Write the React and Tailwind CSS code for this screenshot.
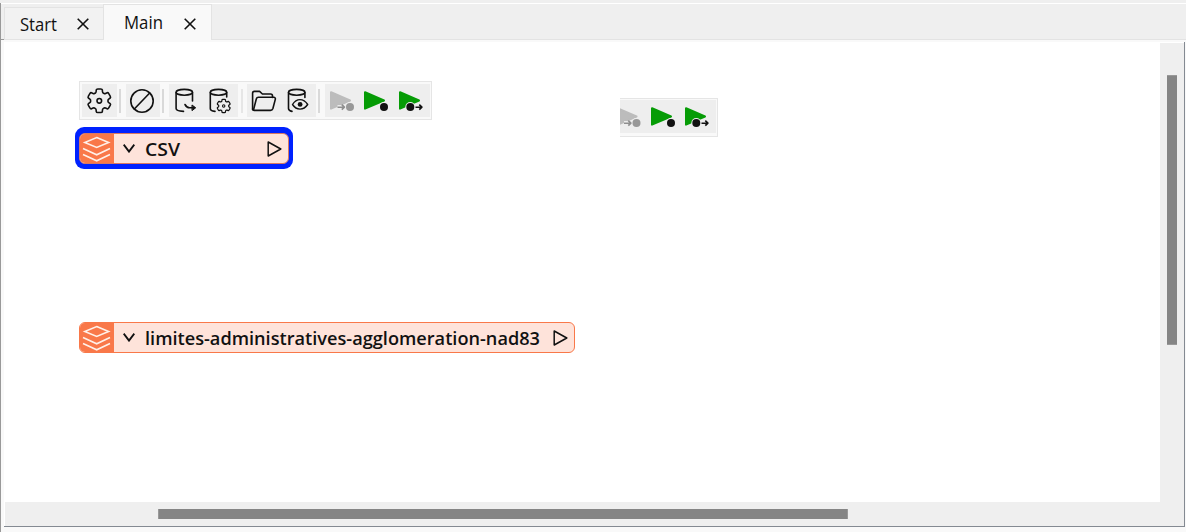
import React from "react";

const INK = "#111111";

function gearPath(cx, cy, tip, root) {
  const points = [];
  for (let i = 0; i < 6; i++) {
    const base = -90 + i * 60;
    [[root, -22], [tip, -14], [tip, 14], [root, 22]].forEach(([r, d]) => {
      const a = ((base + d) * Math.PI) / 180;
      points.push([cx + r * Math.cos(a), cy + r * Math.sin(a)]);
    });
  }
  const mix = (p, q, t) => `${(p[0] + (q[0] - p[0]) * t).toFixed(2)} ${(p[1] + (q[1] - p[1]) * t).toFixed(2)}`;
  const corners = points.map((p, i) => {
    const prev = points[(i + points.length - 1) % points.length];
    const next = points[(i + 1) % points.length];
    return `${mix(p, prev, 0.25)}Q${mix(p, p, 0)} ${mix(p, next, 0.25)}`;
  });
  return "M" + corners.join("L") + "Z";
}

function Icon({ children, className = "w-[35px]", viewBox }) {
  return (
    <svg
      viewBox={viewBox}
      className={`h-[33px] shrink-0 bg-[#eeeeee] ${className}`}
      fill="none"
      stroke={INK}
      strokeWidth="1.6"
      strokeLinecap="round"
      strokeLinejoin="round"
    >
      {children}
    </svg>
  );
}

function Separator({ className = "" }) {
  return <div className={`h-6 w-[2px] shrink-0 bg-[#d9d9d9] ${className}`} />;
}

function RunDisabled({ viewBox = "325 84 34 33", className = "w-[34px]" }) {
  return (
    <Icon viewBox={viewBox} className={className}>
      <path d="M331 92.2L350 100.5L331 108.7Z" fill="#bcbcbc" stroke="#bcbcbc" strokeWidth="2" />
      <path d="M337.5 107.3h8" stroke="#eeeeee" strokeWidth="4.5" strokeLinecap="butt" />
      <circle cx="350" cy="107" r="5" fill="#eeeeee" stroke="none" />
      <path d="M337.5 107.2h6.5M341.8 104.7l2.6 2.5l-2.6 2.5" stroke="#8f8f8f" strokeLinecap="butt" />
      <circle cx="350" cy="107" r="4" fill="#989898" stroke="none" />
    </Icon>
  );
}

function RunTo() {
  return (
    <Icon viewBox="359 84 35 33">
      <path d="M365 92.2L384 100.5L365 108.7Z" fill="#069c06" stroke="#069c06" strokeWidth="2" />
      <circle cx="384" cy="107" r="5" fill="#eeeeee" stroke="none" />
      <circle cx="384" cy="107" r="4" fill={INK} stroke="none" />
    </Icon>
  );
}

function RunFrom({ className = "w-[36px]" }) {
  return (
    <Icon viewBox="394 84 36 33" className={className}>
      <path d="M400 92.2L419 100.5L400 108.7Z" fill="#069c06" stroke="#069c06" strokeWidth="2" />
      <path d="M410 107.5h11" stroke="#eeeeee" strokeWidth="6" strokeLinecap="butt" />
      <circle cx="410.3" cy="107" r="5" fill="#eeeeee" stroke="none" />
      <circle cx="410.3" cy="107" r="4" fill={INK} stroke="none" />
      <path d="M415.5 107.2h6M419.3 104.7l2.6 2.5l-2.6 2.5" strokeLinecap="butt" />
    </Icon>
  );
}

function FullToolbar() {
  return (
    <div className="absolute left-[75px] top-[39px] flex h-[39px] w-[353px] items-center border border-[#e5e5e5] bg-[#f9f9f9] pl-[2px]">
      <Icon viewBox="82 84 35 33">
        <path d={gearPath(99.3, 100.8, 12.1, 8.8)} />
        <circle cx="99.3" cy="100.8" r="2.3" />
      </Icon>
      <Separator className="ml-[2px]" />
      <Icon viewBox="126 84 34 33" className="ml-[5px] w-[34px]">
        <circle cx="142" cy="101" r="11.2" />
        <path d="M134.3 109L149.7 93" />
      </Icon>
      <Separator className="ml-[2px]" />
      <Icon viewBox="169 84 34 33" className="ml-[5px] w-[34px]">
        <ellipse cx="184.3" cy="92.3" rx="8.2" ry="2.9" />
        <path d="M176.1 92.5V108.5C176.1 110 179 111.2 183.5 111.4M192.5 92.5V101" />
        <path d="M185 104.5c1.2 2.2 2.5 3.3 4.5 3.3h4" />
        <path d="M192.3 105.2l3.4 2.6l-3.4 2.6Z" fill={INK} strokeWidth="1" />
      </Icon>
      <Icon viewBox="203 84 35 33">
        <ellipse cx="218.5" cy="92.3" rx="8.2" ry="2.9" />
        <path d="M210.3 92.5V108.5C210.3 110 212 111.2 215 111.4M226.7 92.5V97" />
        <path d={gearPath(223.7, 106, 6.9, 5)} strokeWidth="1.2" />
        <circle cx="223.7" cy="106" r="1.2" strokeWidth="1.1" />
      </Icon>
      <Separator className="ml-[3px] opacity-60" />
      <Icon viewBox="247 84 35 33" className="ml-[4px] w-[35px]">
        <path d="M252.6 109.5V93.2c0-1.2.6-1.8 1.8-1.8h5.2l2.8 2.6h8.2c1.2 0 1.9.8 1.9 1.9v1.5" />
        <path d="M253.4 110.3L256.3 99c.3-1.1 1-1.7 2.1-1.7h15.3c1.3 0 1.9.9 1.6 2.1l-2.4 9.1c-.4 1.3-1.1 1.9-2.4 1.9H254c-.9 0-1.4-.5-1.4-1.3" />
      </Icon>
      <Icon viewBox="282 84 34 33" className="w-[34px]">
        <ellipse cx="296.7" cy="92.3" rx="8.2" ry="2.9" />
        <path d="M288.5 92.5V108.5C288.5 110.2 290 111 292 111.4M304.9 92.5V97.5" />
        <path d="M292.5 104.5C296.5 98 303.5 98 307.7 104.5C303.5 110.6 296.5 110.6 292.5 104.5Z" strokeWidth="1.4" />
        <circle cx="300.1" cy="104.4" r="2.4" fill={INK} stroke="none" />
      </Icon>
      <Separator className="ml-[2px]" />
      <div className="ml-[5px] flex">
        <RunDisabled />
        <RunTo />
        <RunFrom />
      </div>
    </div>
  );
}

function PartialToolbar() {
  return (
    <div className="absolute left-[616px] top-[56px] flex h-[39px] w-[98px] items-start border-y border-r border-[#e5e5e5] bg-[#f9f9f9] pt-px">
      <RunDisabled viewBox="333.5 84 26 33" className="w-[26px]" />
      <RunTo />
      <RunFrom className="-ml-px w-[36px]" />
    </div>
  );
}

function DatasetNode({ label, textWidth, className, edge }) {
  return (
    <div className={`absolute flex h-[31px] items-center overflow-hidden rounded-[6px] border bg-[#fee3da] ${edge} ${className}`}>
      <svg viewBox="80 323 34 29" className="h-full w-[34px] shrink-0 bg-[#f97849]" fill="none" stroke="#fff0e8" strokeWidth="1.6">
        <path d="M96.7 326.5L108.6 331.4L96.7 336.4L84.8 331.4Z" />
        <path d="M83 337.6L96.7 343.8L110 337.6M83 343.6L96.7 349.8L110 343.6" />
      </svg>
      <svg viewBox="0 0 12 9" className="ml-[9px] h-[9px] w-3 shrink-0" fill="none" stroke={INK} strokeWidth="1.9">
        <path d="M.7.6L6 7.6L11.3.6" />
      </svg>
      <svg viewBox={`0 0 ${textWidth} 30`} className="ml-[10px] h-[30px] shrink-0 overflow-visible font-['Open_Sans','Noto_Sans',sans-serif] text-[18.7px] font-semibold" style={{ width: textWidth }}>
        <text x="0" y="21.8" textLength={textWidth} lengthAdjust="spacingAndGlyphs" fill={INK}>{label}</text>
      </svg>
      <svg viewBox="0 0 15 16" className="ml-auto mr-[6px] h-4 w-[15px] shrink-0" fill="none" stroke={INK} strokeWidth="1.5" strokeLinejoin="round">
        <path d="M1.2 1L13.8 8L1.2 15Z" />
      </svg>
    </div>
  );
}

function Close() {
  return (
    <svg viewBox="0 0 12 12" className="size-3 shrink-0" stroke={INK} strokeWidth="1.6">
      <path d="M.7.7l10.6 10.6M11.3.7L.7 11.3" />
    </svg>
  );
}

function TabLabel({ children, width, baseline }) {
  return (
    <svg viewBox={`0 0 ${width} 26`} className="h-[26px] shrink-0 overflow-visible font-['Open_Sans','Noto_Sans',sans-serif] text-[18px]" style={{ width }}>
      <text x="0" y={baseline} textLength={width} lengthAdjust="spacingAndGlyphs" fill={INK}>{children}</text>
    </svg>
  );
}

export default function App() {
  return (
    <div className="flex h-[532px] w-[1186px] flex-col overflow-hidden bg-[#f9f9f9]">
      <div className="h-[3px] shrink-0 bg-[#efefef]" />
      <div className="flex min-h-0 flex-1 flex-col border-l border-[#999999]">
        <div className="flex h-[37px] shrink-0 items-stretch border-t border-white bg-[#efefef]">
          <div className="w-[3px] border-b border-[#999999]" />
          <div className="mt-[3px] flex w-[99px] items-center gap-[20px] border-y border-l border-[#e3e3e3] bg-[#f2f2f2] pl-[15px]">
            <TabLabel width={37} baseline={20}>Start</TabLabel>
            <div className="pt-px"><Close /></div>
          </div>
          <div className="flex w-[109px] items-center gap-[21px] border-x border-t border-[#e3e3e3] bg-[#f9f9f9] pl-[20px]">
            <TabLabel width={39} baseline={19.3}>Main</TabLabel>
            <div className="pt-[3px]"><Close /></div>
          </div>
          <div className="flex-1 border-b border-[#e3e3e3]" />
        </div>
        <div className="ml-[3px] mr-px mt-[2px] flex h-[485px] shrink-0 flex-col border-b border-r border-[#848a92] bg-white">
          <div className="flex h-[460px]">
            <div className="relative min-w-0 flex-1 bg-white">
              <FullToolbar />
              <div className="absolute left-[71px] top-[85px] h-[42px] w-[218px] rounded-[9px] bg-[#0022ff]" />
              <DatasetNode label="CSV" textWidth={35} edge="border-[#d87862]" className="left-[75px] top-[91px] w-[210px]" />
              <DatasetNode label="limites-administratives-agglomeration-nad83" textWidth={395} edge="border-[#f97849]" className="left-[75px] top-[280px] w-[496px]" />
              <PartialToolbar />
            </div>
            <div className="mt-px w-6 bg-[#efefef] pl-[7px] pt-[32px]">
              <div className="h-[270px] w-[10px] border-y border-[#999999] bg-[#858585]" />
            </div>
          </div>
          <div className="ml-px h-6 bg-[#efefef] pl-[153px] pt-[7px]">
            <div className="h-[10px] w-[690px] border-x border-[#999999] bg-[#858585]" />
          </div>
        </div>
      </div>
    </div>
  );
}
